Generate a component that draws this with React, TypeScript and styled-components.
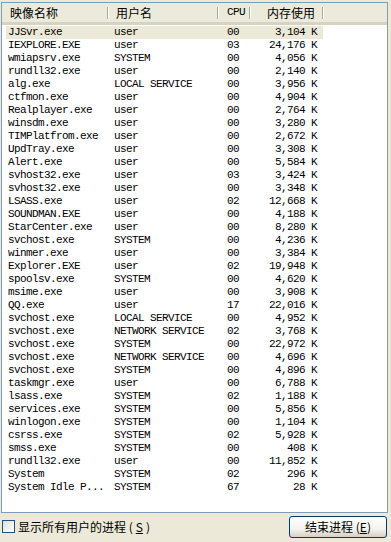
import React from 'react';
import styled, { createGlobalStyle } from 'styled-components';

const GlobalStyle = createGlobalStyle`
  html, body {
    margin: 0;
    padding: 0;
    background: #ece9d8;
  }
`;

const rows: [string, string, string, string][] = [
  ['JJSvr.exe', 'user', '00', '3,104 K'],
  ['IEXPLORE.EXE', 'user', '03', '24,176 K'],
  ['wmiapsrv.exe', 'SYSTEM', '00', '4,056 K'],
  ['rundll32.exe', 'user', '00', '2,140 K'],
  ['alg.exe', 'LOCAL SERVICE', '00', '3,956 K'],
  ['ctfmon.exe', 'user', '00', '4,904 K'],
  ['Realplayer.exe', 'user', '00', '2,764 K'],
  ['winsdm.exe', 'user', '00', '3,280 K'],
  ['TIMPlatfrom.exe', 'user', '00', '2,672 K'],
  ['UpdTray.exe', 'user', '00', '3,308 K'],
  ['Alert.exe', 'user', '00', '5,584 K'],
  ['svhost32.exe', 'user', '03', '3,424 K'],
  ['svhost32.exe', 'user', '00', '3,348 K'],
  ['LSASS.exe', 'user', '02', '12,668 K'],
  ['SOUNDMAN.EXE', 'user', '00', '4,188 K'],
  ['StarCenter.exe', 'user', '00', '8,280 K'],
  ['svchost.exe', 'SYSTEM', '00', '4,236 K'],
  ['winmer.exe', 'user', '00', '3,384 K'],
  ['Explorer.EXE', 'user', '02', '19,948 K'],
  ['spoolsv.exe', 'SYSTEM', '00', '4,620 K'],
  ['msime.exe', 'user', '00', '3,908 K'],
  ['QQ.exe', 'user', '17', '22,016 K'],
  ['svchost.exe', 'LOCAL SERVICE', '00', '4,952 K'],
  ['svchost.exe', 'NETWORK SERVICE', '02', '3,768 K'],
  ['svchost.exe', 'SYSTEM', '00', '22,972 K'],
  ['svchost.exe', 'NETWORK SERVICE', '00', '4,696 K'],
  ['svchost.exe', 'SYSTEM', '00', '4,896 K'],
  ['taskmgr.exe', 'user', '00', '6,788 K'],
  ['lsass.exe', 'SYSTEM', '02', '1,188 K'],
  ['services.exe', 'SYSTEM', '00', '5,856 K'],
  ['winlogon.exe', 'SYSTEM', '00', '1,104 K'],
  ['csrss.exe', 'SYSTEM', '02', '5,928 K'],
  ['smss.exe', 'SYSTEM', '00', '408 K'],
  ['rundll32.exe', 'user', '00', '11,852 K'],
  ['System', 'SYSTEM', '02', '296 K'],
  ['System Idle P...', 'SYSTEM', '67', '28 K'],
];

const COLS = '106px 110px 32px 73px 1fr';

const Window = styled.div`
  width: 391px;
  height: 542px;
  background: #ece9d8;
  box-sizing: border-box;
  padding: 2px 3px 0 1px;
  display: flex;
  flex-direction: column;
  font-family: 'Liberation Mono', 'Noto Sans CJK SC', monospace;
`;

const ListBox = styled.div`
  height: 511px;
  box-sizing: border-box;
  border: 1px solid #7f9db9;
  background: #ffffff;
  overflow: hidden;
`;

const Header = styled.div`
  display: grid;
  grid-template-columns: ${COLS};
  height: 19px;
  background: #ebeadb;
  border-bottom: 3px solid #d6d3c3;
  box-sizing: content-box;
  margin-bottom: 1px;
`;

const HeaderCell = styled.div<{ $pad: number; $mono?: boolean }>`
  position: relative;
  padding-left: ${p => p.$pad}px;
  font-family: ${p =>
    p.$mono ? "'Liberation Mono', monospace" : "'Noto Sans CJK SC', sans-serif"};
  font-size: ${p => (p.$mono ? 11 : 12)}px;
  letter-spacing: ${p => (p.$mono ? '-0.6px' : '0')};
  line-height: 19px;
  color: #000;
  white-space: nowrap;

  &::after {
    content: '';
    position: absolute;
    right: 0;
    top: 4px;
    height: 12px;
    width: 1px;
    background: #aca899;
    box-shadow: 1px 0 0 #fff;
  }
`;

const HeaderRest = styled.div``;

const Row = styled.div`
  display: grid;
  grid-template-columns: 4px 102px 110px 32px 73px 1fr;
  height: 13px;
`;

const Cell = styled.div<{ $pad?: number; $right?: boolean; $sel?: boolean }>`
  font-size: 11px;
  letter-spacing: -0.6px;
  line-height: 13px;
  color: #000;
  white-space: pre;
  padding-left: ${p => p.$pad ?? 0}px;
  padding-right: ${p => (p.$right ? 6 : 0)}px;
  text-align: ${p => (p.$right ? 'right' : 'left')};
  background: ${p => (p.$sel ? '#ece9d8' : 'transparent')};
`;

const Footer = styled.div`
  flex: 1;
  display: flex;
  align-items: center;
  justify-content: space-between;
  padding: 0 0 2px 1px;
`;

const CheckLabel = styled.label`
  display: flex;
  align-items: center;
  gap: 3px;
  font-family: 'Noto Sans CJK SC', sans-serif;
  font-size: 12px;
  color: #000;
`;

const CheckBox = styled.span`
  width: 11px;
  height: 11px;
  border: 1px solid #1c5180;
  background: linear-gradient(135deg, #dcdcd7 0%, #ffffff 90%);
`;

const Button = styled.button`
  width: 98px;
  height: 22px;
  border: 1px solid #003c74;
  border-radius: 3px;
  background: linear-gradient(180deg, #ffffff 0%, #f4f3ee 60%, #d6d0c5 100%);
  font-family: 'Noto Sans CJK SC', sans-serif;
  font-size: 12px;
  color: #000;
  padding: 0;
  margin-right: 1px;
`;

const Key = styled.span`
  text-decoration: underline;
`;

export default function App() {
  return (
    <>
      <GlobalStyle />
      <Window>
        <ListBox>
          <Header>
            <HeaderCell $pad={8}>映像名称</HeaderCell>
            <HeaderCell $pad={8}>用户名</HeaderCell>
            <HeaderCell $pad={9} $mono>CPU</HeaderCell>
            <HeaderCell $pad={17}>内存使用</HeaderCell>
            <HeaderRest />
          </Header>
          {rows.map(([name, user, cpu, mem], i) => {
            const sel = i === 0;
            return (
              <Row key={i}>
                <Cell />
                <Cell $pad={2} $sel={sel}>{name}</Cell>
                <Cell $pad={6} $sel={sel}>{user}</Cell>
                <Cell $pad={9} $sel={sel}>{cpu}</Cell>
                <Cell $right $sel={sel}>{mem}</Cell>
                <Cell />
              </Row>
            );
          })}
        </ListBox>
        <Footer>
          <CheckLabel>
            <CheckBox />
            显示所有用户的进程 (<Key>S</Key>)
          </CheckLabel>
          <Button>
            结束进程 (<Key>E</Key>)
          </Button>
        </Footer>
      </Window>
    </>
  );
}
